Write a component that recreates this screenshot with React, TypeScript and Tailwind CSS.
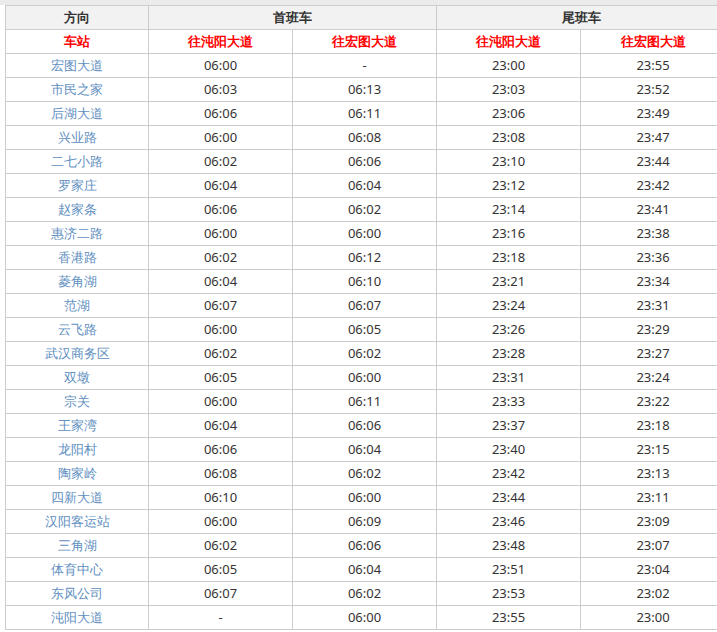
const rows: [string, string, string, string, string][] = [
  ["宏图大道", "06:00", "-", "23:00", "23:55"],
  ["市民之家", "06:03", "06:13", "23:03", "23:52"],
  ["后湖大道", "06:06", "06:11", "23:06", "23:49"],
  ["兴业路", "06:00", "06:08", "23:08", "23:47"],
  ["二七小路", "06:02", "06:06", "23:10", "23:44"],
  ["罗家庄", "06:04", "06:04", "23:12", "23:42"],
  ["赵家条", "06:06", "06:02", "23:14", "23:41"],
  ["惠济二路", "06:00", "06:00", "23:16", "23:38"],
  ["香港路", "06:02", "06:12", "23:18", "23:36"],
  ["菱角湖", "06:04", "06:10", "23:21", "23:34"],
  ["范湖", "06:07", "06:07", "23:24", "23:31"],
  ["云飞路", "06:00", "06:05", "23:26", "23:29"],
  ["武汉商务区", "06:02", "06:02", "23:28", "23:27"],
  ["双墩", "06:05", "06:00", "23:31", "23:24"],
  ["宗关", "06:00", "06:11", "23:33", "23:22"],
  ["王家湾", "06:04", "06:06", "23:37", "23:18"],
  ["龙阳村", "06:06", "06:04", "23:40", "23:15"],
  ["陶家岭", "06:08", "06:02", "23:42", "23:13"],
  ["四新大道", "06:10", "06:00", "23:44", "23:11"],
  ["汉阳客运站", "06:00", "06:09", "23:46", "23:09"],
  ["三角湖", "06:02", "06:06", "23:48", "23:07"],
  ["体育中心", "06:05", "06:04", "23:51", "23:04"],
  ["东风公司", "06:07", "06:02", "23:53", "23:02"],
  ["沌阳大道", "-", "06:00", "23:55", "23:00"],
];

const cell = "border border-[#cccccc] h-[24px] p-0 text-center";

export default function App() {
  return (
    <div className="w-[717px] h-[632px] overflow-hidden bg-white text-[13px] leading-none [font-family:'Liberation_Sans','Noto_Sans_CJK_SC',sans-serif]">
      <div className="h-[5px] bg-[#ebebeb]" />
      <div className="pl-[5px]">
        <table className="border-collapse table-fixed w-[720px]">
          <colgroup>
            <col className="w-[143px]" />
            <col className="w-[144px]" />
            <col className="w-[144px]" />
            <col className="w-[144px]" />
            <col className="w-[145px]" />
          </colgroup>
          <thead>
            <tr className="bg-[#f2f2f2] text-[#333333] font-bold">
              <th className={cell}>方向</th>
              <th className={cell} colSpan={2}>首班车</th>
              <th className={cell} colSpan={2}>尾班车</th>
            </tr>
            <tr className="text-[#ff0000] font-bold">
              <th className={cell}>车站</th>
              <th className={cell}>往沌阳大道</th>
              <th className={cell}>往宏图大道</th>
              <th className={cell}>往沌阳大道</th>
              <th className={cell}>往宏图大道</th>
            </tr>
          </thead>
          <tbody>
            {rows.map((r) => (
              <tr key={r[0]} className="text-[#333333]">
                <td className={`${cell} text-[#5f8fbf]`}>{r[0]}</td>
                <td className={cell}>{r[1]}</td>
                <td className={cell}>{r[2]}</td>
                <td className={cell}>{r[3]}</td>
                <td className={cell}>{r[4]}</td>
              </tr>
            ))}
          </tbody>
        </table>
      </div>
    </div>
  );
}
